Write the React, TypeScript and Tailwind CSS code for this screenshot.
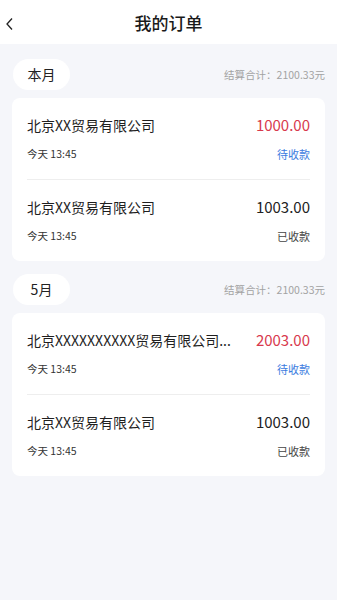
import React from 'react';

type Order = { name: string; amount: string; time: string; paid: boolean };

const sections: { month: string; total: string; orders: Order[] }[] = [
  {
    month: '本月',
    total: '结算合计：2100.33元',
    orders: [
      { name: '北京XX贸易有限公司', amount: '1000.00', time: '今天 13:45', paid: false },
      { name: '北京XX贸易有限公司', amount: '1003.00', time: '今天 13:45', paid: true },
    ],
  },
  {
    month: '5月',
    total: '结算合计：2100.33元',
    orders: [
      { name: '北京XXXXXXXXXX贸易有限公司...', amount: '2003.00', time: '今天 13:45', paid: false },
      { name: '北京XX贸易有限公司', amount: '1003.00', time: '今天 13:45', paid: true },
    ],
  },
];

const font = { fontFamily: '"Noto Sans CJK SC", "Noto Sans", sans-serif' };

export default function App() {
  return (
    <div className="w-[337px] h-[600px] bg-[#f5f6fa] overflow-hidden" style={font}>
      <div className="h-[44px] bg-white flex items-center relative">
        <svg className="absolute left-[4px] top-[17px]" width="12" height="14" viewBox="0 0 12 14">
          <path d="M8 1.5 L3 7 L8 12.5" fill="none" stroke="#222" strokeWidth="1.3" />
        </svg>
        <div className="flex-1 text-center text-[17px] font-medium text-[#1a1a1a] leading-none">我的订单</div>
      </div>

      {sections.map((s, si) => (
        <div key={si} className={si === 0 ? 'pt-[15px]' : 'pt-[13px]'}>
          <div className="flex items-center justify-between pl-[13px] pr-[12px]">
            <div className="w-[57px] h-[31px] rounded-full bg-white flex items-center justify-center text-[14px] text-[#222]">
              {s.month}
            </div>
            <div className="text-[10.5px] text-[#a3a3a3]">{s.total}</div>
          </div>
          <div className="mx-[12px] mt-[8px] bg-white rounded-[8px] px-[15px]">
            {s.orders.map((o, i) => (
              <div key={i} className={`pt-[17px] pb-[17px] ${i > 0 ? 'border-t border-[#eeeeee]' : ''}`}>
                <div className="flex items-center justify-between h-[20px]">
                  <span className="text-[14px] text-[#1f1f1f] whitespace-nowrap">{o.name}</span>
                  <span className={`text-[15px] ${o.paid ? 'text-[#222]' : 'text-[#d8394d]'}`}>{o.amount}</span>
                </div>
                <div className="flex items-center justify-between h-[16px] mt-[11px]">
                  <span className="text-[10.5px] text-[#333]">{o.time}</span>
                  <span className={`text-[11px] ${o.paid ? 'text-[#444]' : 'text-[#3b7be0]'}`}>
                    {o.paid ? '已收款' : '待收款'}
                  </span>
                </div>
              </div>
            ))}
          </div>
        </div>
      ))}
    </div>
  );
}
